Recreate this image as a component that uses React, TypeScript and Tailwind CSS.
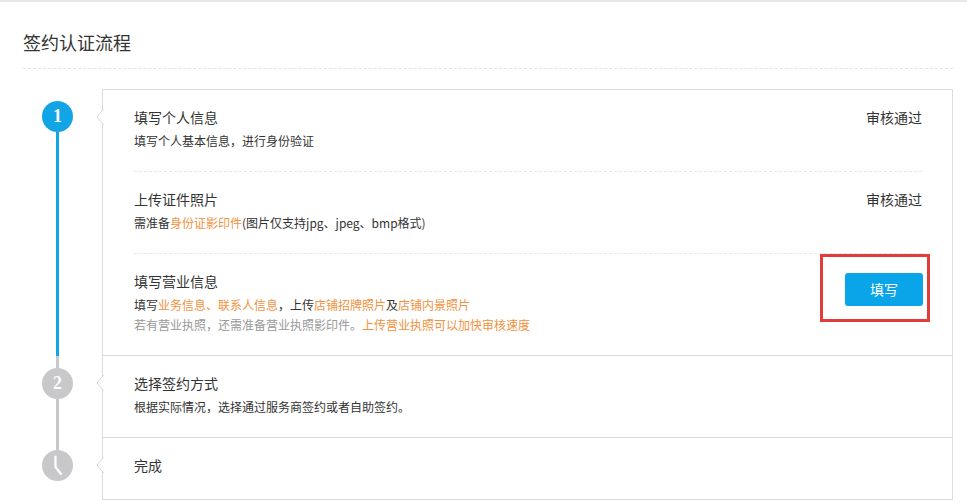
import React from "react";

const font = { fontFamily: '"Noto Sans CJK SC", "Microsoft YaHei", sans-serif' };

function cx(...c: Array<string | false | undefined>) {
  return c.filter(Boolean).join(" ");
}

function Notch() {
  // small arrow on the card's left border, pointing at the step circle
  return (
    <svg className="absolute -left-[7px] top-[19px]" width="8" height="16" viewBox="0 0 8 16">
      <polygon points="8,0 1,8 8,16" fill="#fff" />
      <polyline points="7.5,0 1,8 7.5,16" fill="none" stroke="#d6d6d6" strokeWidth="1" />
    </svg>
  );
}

function Orange({ children }: { children: React.ReactNode }) {
  return <span className="text-[#f39240]">{children}</span>;
}

function Item({
  title,
  status,
  children,
  last,
}: {
  title: string;
  status?: string;
  children: React.ReactNode;
  last?: boolean;
}) {
  return (
    <div
      className={cx(
        "flex justify-between pt-[17px] pb-[20px]",
        !last && "border-b border-dashed border-[#e6e6e6]"
      )}
    >
      <div>
        <div className="text-[14px] leading-[20px] text-[#333]">{title}</div>
        <div className="mt-1 text-[12px] leading-[20px] text-[#333]">{children}</div>
      </div>
      {status && <div className="text-[14px] leading-[20px] text-[#333]">{status}</div>}
    </div>
  );
}

function Circle({ color, children }: { color: string; children: React.ReactNode }) {
  return (
    <div
      className={cx(
        "w-[31px] h-[31px] rounded-full flex items-center justify-center shrink-0 text-white font-bold text-[18px]",
        color
      )}
      style={{ fontFamily: '"Liberation Serif", serif' }}
    >
      {children}
    </div>
  );
}

function Step({
  circle,
  lineAbove,
  lineBelow,
  children,
  first,
}: {
  circle: React.ReactNode;
  lineAbove?: string;
  lineBelow?: string;
  children: React.ReactNode;
  first?: boolean;
}) {
  return (
    <div className="flex">
      <div className="w-[79px] shrink-0 flex flex-col items-start pl-[19px]">
        <div className={cx("w-[3px] h-[12px] ml-[14px]", lineAbove)} />
        {circle}
        <div className={cx("w-[3px] flex-1 ml-[14px]", lineBelow)} />
      </div>
      <div
        className={cx(
          "relative flex-1 border-x border-b border-[#dcdcdc] pl-[31px] pr-[30px]",
          first && "border-t"
        )}
      >
        <Notch />
        {children}
      </div>
    </div>
  );
}

export default function App() {
  return (
    <div className="min-h-[504px] bg-white border-t-2 border-[#e8e8e8] pl-[23px] pr-[14px]" style={font}>
      <div className="pt-[28px] pb-[14px] border-b border-dashed border-[#e3e3e3]">
        <h1 className="text-[18px] leading-[24px] text-[#333]">签约认证流程</h1>
      </div>

      <div className="mt-[20px]">
        <Step first circle={<Circle color="bg-[#12a5e6]">1</Circle>} lineBelow="bg-[#12a5e6]">
          <Item title="填写个人信息" status="审核通过">
            填写个人基本信息，进行身份验证
          </Item>
          <Item title="上传证件照片" status="审核通过">
            需准备<Orange>身份证影印件</Orange>(图片仅支持jpg、jpeg、bmp格式)
          </Item>
          <div className="flex justify-between pt-[17px] pb-[20px]">
            <div>
              <div className="text-[14px] leading-[20px] text-[#333]">填写营业信息</div>
              <div className="mt-1 text-[12px] leading-[20px] text-[#333]">
                填写<Orange>业务信息、联系人信息</Orange>，上传<Orange>店铺招牌照片</Orange>及
                <Orange>店铺内景照片</Orange>
              </div>
              <div className="text-[12px] leading-[20px] text-[#999]">
                若有营业执照，还需准备营业执照影印件。<Orange>上传营业执照可以加快审核速度</Orange>
              </div>
            </div>
            <div className="relative mt-[2px] mr-[-1px]">
              <button className="w-[78px] h-[33px] rounded-[3px] bg-[#0aa5e9] text-white text-[14px]">
                填写
              </button>
              <div className="absolute -left-[25px] -top-[19px] w-[110px] h-[68px] border-[3px] border-[#e23b3b]" />
            </div>
          </div>
        </Step>

        <Step circle={<Circle color="bg-[#c8c8ca]">2</Circle>} lineAbove="bg-[#c8c8ca]" lineBelow="bg-[#c8c8ca]">
          <Item title="选择签约方式" last>
            根据实际情况，选择通过服务商签约或者自助签约。
          </Item>
        </Step>

        <Step
          circle={
            <Circle color="bg-[#c8c8ca]">
              <svg width="31" height="31" viewBox="0 0 31 31">
                <path d="M13.5 6.5 V17 L19 24" fill="none" stroke="#fff" strokeWidth="2.2" strokeLinecap="round" strokeLinejoin="round" />
              </svg>
            </Circle>
          }
          lineAbove="bg-[#c8c8ca]"
        >
          <div className="pt-[17px] pb-[24px] text-[14px] leading-[20px] text-[#333]">完成</div>
        </Step>
      </div>
    </div>
  );
}
